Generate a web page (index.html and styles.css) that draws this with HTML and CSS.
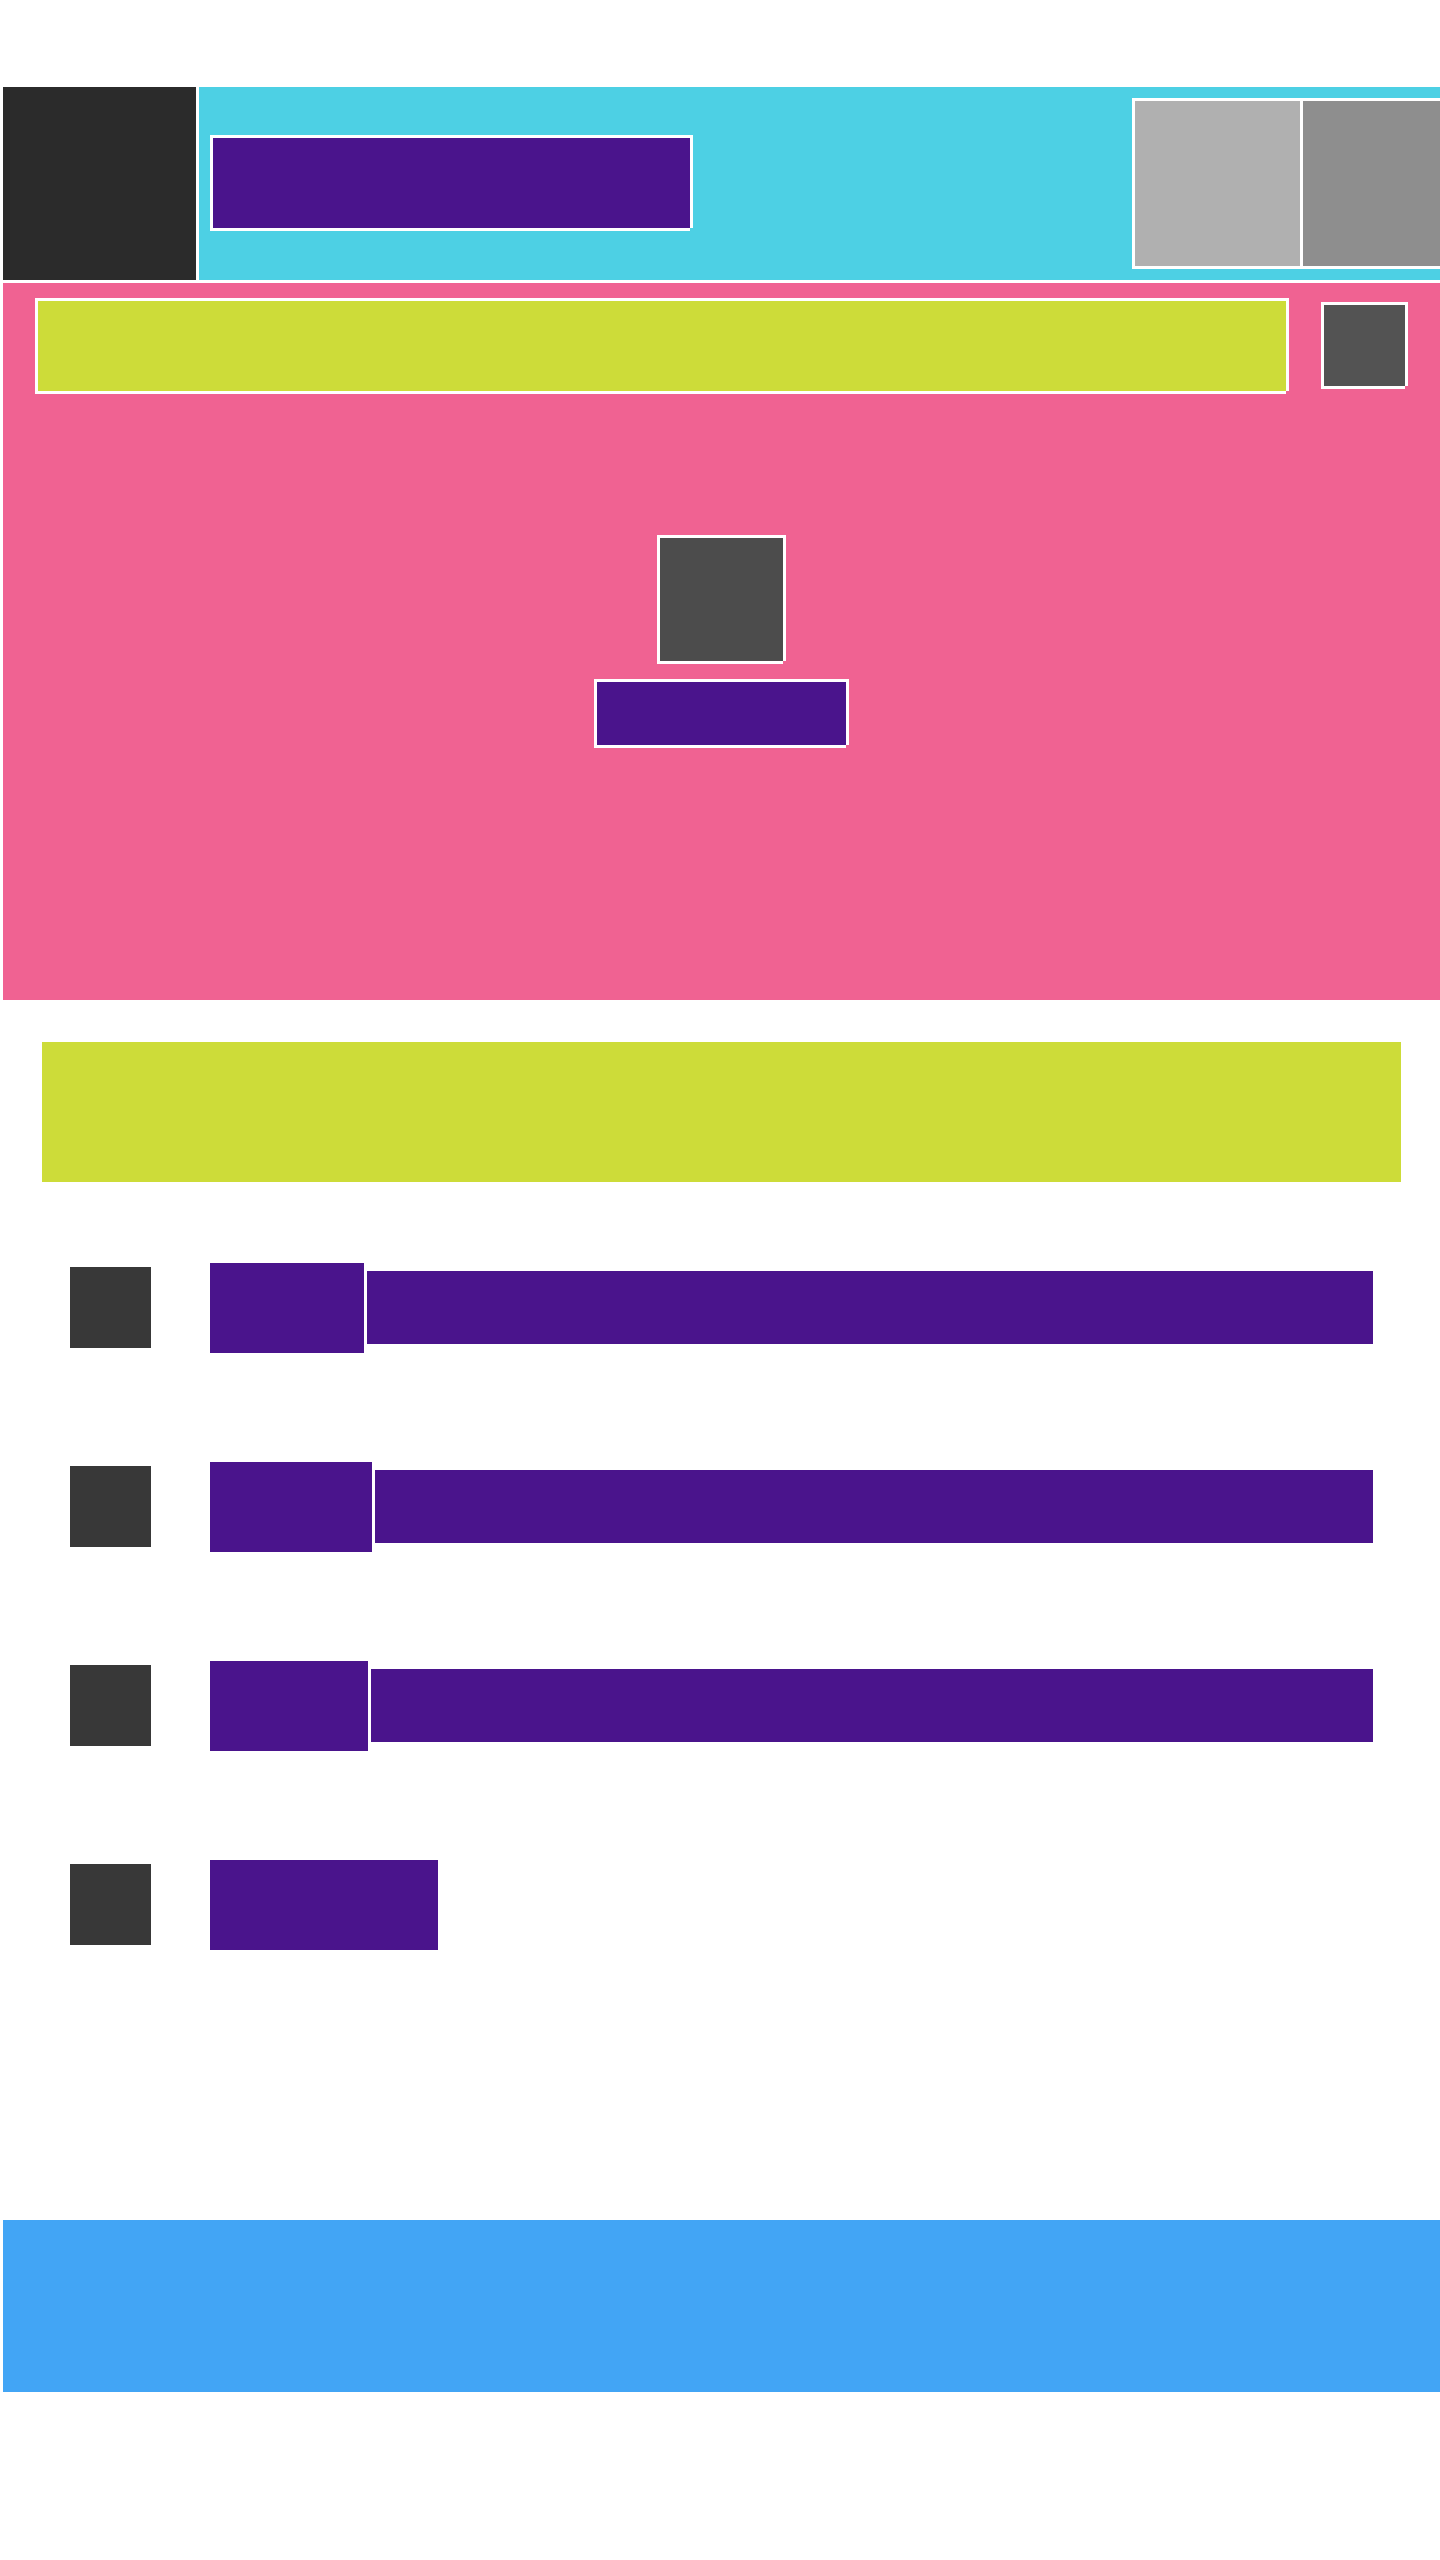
FILE: index.html
```html
<!DOCTYPE html>
<html lang="en">
<head>
<meta charset="utf-8">
<meta name="viewport" content="width=device-width, initial-scale=1">
<title>Wireframe</title>
<link rel="stylesheet" href="styles.css">
</head>
<body>
<header class="topbar">
  <div class="nav-icon"></div>
  <div class="bar">
    <div class="title outlined"></div>
    <div class="actions">
      <div class="action action-light outlined"></div>
      <div class="action action-mid outlined"></div>
    </div>
  </div>
</header>
<main>
  <section class="hero">
    <div class="search-row">
      <div class="search outlined"></div>
      <div class="search-icon outlined"></div>
    </div>
    <div class="empty-state">
      <div class="empty-icon outlined"></div>
      <div class="empty-label outlined"></div>
    </div>
  </section>
  <div class="banner"></div>
  <ul class="list">
    <li class="row"><div class="row-icon"></div><div class="label label-a"></div><div class="value"></div></li>
    <li class="row"><div class="row-icon"></div><div class="label label-b"></div><div class="value"></div></li>
    <li class="row"><div class="row-icon"></div><div class="label label-c"></div><div class="value"></div></li>
    <li class="row"><div class="row-icon"></div><div class="label label-d"></div></li>
  </ul>
</main>
<footer class="footer"></footer>
</body>
</html>
```

FILE: styles.css
```css
:root {
  --line: 3px;
  --purple: #4a148c;
  --lime: #cddc39;
}

* {
  box-sizing: border-box;
}

body {
  margin: 0;
  padding: 87px 0 168px 3px;
  background: #fff;
  font-family: "Liberation Sans", Arial, sans-serif;
  overflow-x: hidden;
}

/* White edge with an open bottom-right corner */
.outlined {
  box-shadow:
    -3px -3px #fff,
    3px -3px #fff,
    -3px 3px #fff,
    3px 0 #fff,
    0 3px #fff;
}

.topbar {
  display: flex;
  gap: var(--line);
  height: 193px;
  margin-bottom: var(--line);
}

.nav-icon {
  flex: none;
  width: 193px;
  background: #2b2b2b;
}

.bar {
  flex: 1;
  display: flex;
  align-items: flex-start;
  justify-content: space-between;
  padding: 14px 0 0 14px;
  background: #4dd0e4;
}

.title {
  width: 477px;
  height: 90px;
  margin-top: 37px;
  background: var(--purple);
}

.actions {
  display: flex;
  gap: var(--line);
}

.action {
  height: 165px;
}

.action-light {
  width: 165px;
  background: #b0b0b0;
}

.action-mid {
  width: 137px;
  background: #8e8e8e;
}

.hero {
  padding: 18px 35px 255px;
  background: #f06292;
}

.search-row {
  display: flex;
  gap: 38px;
}

.search {
  flex: 1;
  height: 90px;
  background: var(--lime);
}

.search-icon {
  width: 81px;
  height: 81px;
  margin-top: 4px;
  background: #535353;
}

.empty-state {
  display: flex;
  flex-direction: column;
  align-items: center;
  gap: 21px;
  margin-top: 147px;
}

.empty-icon {
  width: 123px;
  height: 123px;
  background: #4c4c4c;
}

.empty-label {
  width: 249px;
  height: 63px;
  background: var(--purple);
}

.banner {
  height: 140px;
  margin: 42px 39px 81px;
  background: var(--lime);
}

.list {
  display: flex;
  flex-direction: column;
  gap: 109px;
  margin: 0;
  padding: 0 67px;
  list-style: none;
}

.row {
  display: flex;
  align-items: flex-start;
  gap: var(--line);
}

.row-icon {
  flex: none;
  width: 81px;
  height: 81px;
  margin: 4px 56px 0 0;
  background: #383838;
}

.label {
  flex: none;
  height: 90px;
  background: var(--purple);
}

.label-a {
  width: 154px;
}

.label-b {
  width: 162px;
}

.label-c {
  width: 158px;
}

.label-d {
  width: 228px;
}

.value {
  flex: 1;
  height: 73px;
  margin-top: 8px;
  background: var(--purple);
}

.footer {
  height: 172px;
  margin-top: 270px;
  background: #42a5f5;
}
```
